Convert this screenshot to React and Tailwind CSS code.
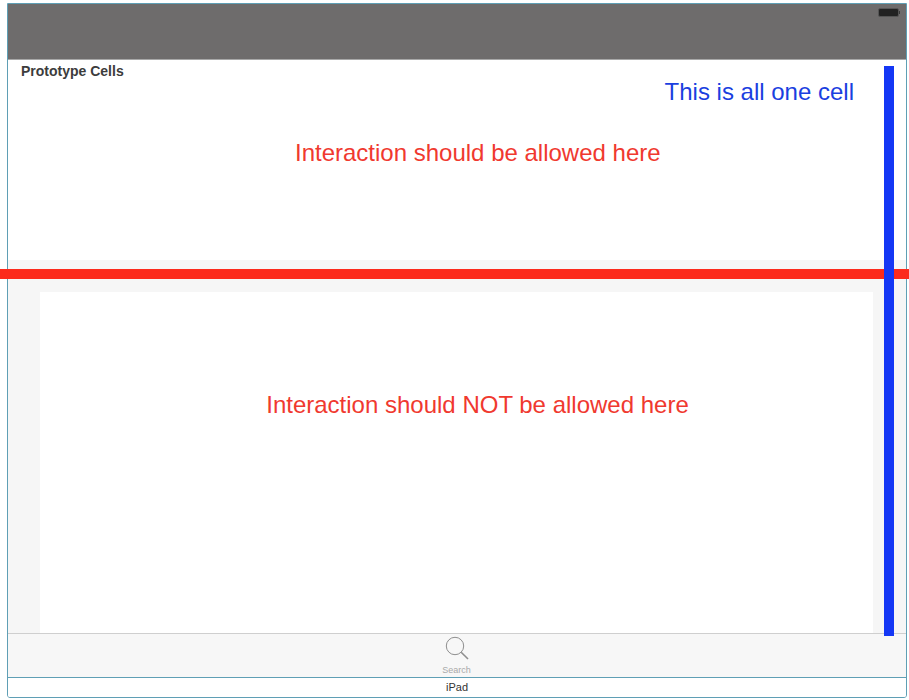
import React from 'react';

function SearchGlyph() {
  return (
    <svg width="24" height="24" viewBox="0 0 24 24" fill="none" stroke="#8e8e8e" className="block">
      <circle cx="10" cy="10" r="8.7" strokeWidth="1" />
      <path d="M16.2 16.2 L23 23" strokeWidth="1.6" />
    </svg>
  );
}

function Battery() {
  return (
    <div className="flex items-center self-start">
      <div className="w-[21px] h-[9px] rounded-[2px] border border-[#555555] bg-[#222222]" />
      <div className="w-[1px] h-[3px] bg-[#3a3a3a]" />
    </div>
  );
}

export default function App() {
  return (
    <div className="relative w-[909px] h-[700px] bg-white overflow-hidden font-['Liberation_Sans',Arial,sans-serif]">
      <div className="pt-[3px] pl-[7px] pr-[2px] pb-[2px] h-full">
        {/* storyboard device frame */}
        <div className="flex flex-col h-full border border-[#5f9fb5] rounded-b-[3px] overflow-hidden">
          <div className="h-[56px] shrink-0 bg-[#6e6c6c] border-b border-[#a8a8a8] flex justify-end pt-[4px] pr-[6px]">
            <Battery />
          </div>

          <div className="h-[200px] shrink-0 bg-white">
            <div className="pl-[13px] pt-[5px] text-[14px] leading-[13px] font-bold text-[#3c3c3c]">Prototype Cells</div>
            <div className="flex justify-end pr-[52px] text-[24px] leading-[27px] text-[#1a3fe0]">This is all one cell</div>
            <div className="pt-[33px] pl-[287px] text-[24px] leading-[29px] text-[#f0392f]">Interaction should be allowed here</div>
          </div>

          <div className="flex-1 min-h-0 bg-[#f6f6f6] pt-[32px] pl-[32px] pr-[33px]">
            <div className="h-full bg-white flex justify-center pt-[98px] pl-[42px]">
              <div className="text-[24px] leading-[29px] text-[#f0392f]">Interaction should NOT be allowed here</div>
            </div>
          </div>

          <div className="h-[44px] shrink-0 bg-[#f7f7f7] border-t border-[#cfcfcf] flex flex-col items-center pt-[2px] pr-[1px]">
            <SearchGlyph />
            <div className="mt-[5px] text-[9px] leading-[10px] text-[#a9a9a9]">Search</div>
          </div>

          <div className="h-[20px] shrink-0 border-t border-[#5f9fb5] bg-white flex items-center justify-center text-[11px] text-[#333333]">iPad</div>
        </div>
      </div>

      {/* annotations drawn over the screenshot */}
      <div className="absolute left-0 top-[269px] w-full h-[10px] bg-[#fc2a1c]" />
      <div className="absolute left-[884px] top-[66px] w-[10px] h-[570px] bg-[#1437f5]" />
    </div>
  );
}
